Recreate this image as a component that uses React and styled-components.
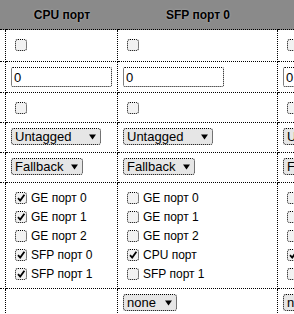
import React from 'react';
import styled, { createGlobalStyle } from 'styled-components';

const GlobalStyle = createGlobalStyle`
  html, body {
    margin: 0;
    padding: 0;
    background: #fff;
    overflow: hidden;
  }
  body {
    font-family: 'Liberation Sans', Arial, sans-serif;
    font-size: 12px;
    color: #000;
  }
`;

// one column per port, like the switch's VLAN page
const ports = [
  {
    name: 'CPU порт',
    width: 112,
    mode: 'Untagged',
    members: [
      ['GE порт 0', true],
      ['GE порт 1', true],
      ['GE порт 2', false],
      ['SFP порт 0', true],
      ['SFP порт 1', true],
    ],
    extra: null,
  },
  {
    name: 'SFP порт 0',
    width: 160,
    mode: 'Untagged',
    members: [
      ['GE порт 0', false],
      ['GE порт 1', false],
      ['GE порт 2', false],
      ['CPU порт', true],
      ['SFP порт 1', false],
    ],
    extra: 'none',
  },
  {
    name: 'SFP порт 1',
    width: 160,
    mode: 'Untagged',
    members: [
      ['GE порт 0', false],
      ['GE порт 1', false],
      ['GE порт 2', false],
      ['CPU порт', true],
      ['SFP порт 0', false],
    ],
    extra: 'none',
  },
];

const Table = styled.table`
  border-collapse: separate;
  border-spacing: 0;
  table-layout: fixed;
  width: 438px;
`;

const Head = styled.th`
  box-sizing: border-box;
  width: ${(p) => p.$w}px;
  height: 30px;
  padding: 0;
  font-size: 12px;
  font-weight: bold;
  text-align: center;
  vertical-align: middle;
  white-space: nowrap;
  background: #8a8a8a;
  border-bottom: 1px dotted #000;
  text-shadow: 0 0 2px #bbb;
`;

const Cell = styled.td`
  box-sizing: border-box;
  height: ${(p) => p.$h}px;
  padding: 5px 5px 0;
  vertical-align: top;
  white-space: nowrap;
  overflow: hidden;
  border-right: 1px dotted #000;
  border-bottom: 1px dotted #000;
`;

const Line = styled.div`
  display: flex;
  align-items: center;
  height: 19px;
`;

const Box = styled.span`
  box-sizing: border-box;
  display: inline-flex;
  align-items: center;
  justify-content: center;
  width: 12px;
  height: 12px;
  margin: 0 4px 0 4px;
  border: 1px dotted #000;
  border-radius: 3px;
  background: #f2f2f2;
  flex: none;
`;

const TextInput = styled.input`
  box-sizing: border-box;
  width: 101px;
  height: 20px;
  margin: 0;
  padding: 0 2px;
  border: 1px dotted #000;
  border-radius: 2px;
  font-family: 'Liberation Sans', Arial, sans-serif;
  font-size: 13px;
  color: #000;
  background: #fff;
  outline: none;
`;

const Select = styled.div`
  box-sizing: border-box;
  display: flex;
  align-items: center;
  justify-content: space-between;
  width: ${(p) => p.$w}px;
  height: 17px;
  padding: 0 4px 0 3px;
  border: 1px dotted #000;
  border-radius: 3px;
  background: #e6e6e6;
  font-size: 13px;
  line-height: 15px;
`;

const Arrow = () => (
  <svg width="7" height="6" viewBox="0 0 7 6">
    <path d="M0 0.5 H7 L3.5 5.5 Z" fill="#000" />
  </svg>
);

const Check = ({ on }) => (
  <Box>
    {on && (
      <svg width="10" height="10" viewBox="0 0 10 10">
        <path d="M2 5.2 L4.2 7.6 L8.4 1.8" fill="none" stroke="#000" strokeWidth="1.8" />
      </svg>
    )}
  </Box>
);

const selectWidth = { Untagged: 90, Fallback: 72, none: 54 };

const Drop = ({ value }) => (
  <Select $w={selectWidth[value]}>
    <span>{value}</span>
    <Arrow />
  </Select>
);

const Gutter = styled.td`
  box-sizing: border-box;
  height: ${(p) => p.$h}px;
  padding: 0;
  border-right: 1px dotted #000;
  border-bottom: 1px dotted #000;
`;

const rows = [
  { h: 32, render: () => <Line><Check on={false} /></Line> },
  { h: 31, render: () => <TextInput defaultValue="0" /> },
  { h: 30, render: () => <Line><Check on={false} /></Line> },
  { h: 30, render: (p) => <Drop value={p.mode} /> },
  { h: 30, render: () => <Drop value="Fallback" /> },
  {
    h: 106,
    render: (p) =>
      p.members.map(([label, on]) => (
        <Line key={label}>
          <Check on={on} />
          {label}
        </Line>
      )),
  },
  { h: 40, render: (p) => (p.extra ? <Drop value={p.extra} /> : null) },
];

export default function App() {
  return (
    <>
      <GlobalStyle />
      <Table>
        <thead>
          <tr>
            <Head $w={6} />
            {ports.map((p) => (
              <Head key={p.name} $w={p.width}>{p.name}</Head>
            ))}
          </tr>
        </thead>
        <tbody>
          {rows.map((r, i) => (
            <tr key={i}>
              <Gutter $h={r.h} />
              {ports.map((p) => (
                <Cell key={p.name} $h={r.h}>{r.render(p)}</Cell>
              ))}
            </tr>
          ))}
        </tbody>
      </Table>
    </>
  );
}
